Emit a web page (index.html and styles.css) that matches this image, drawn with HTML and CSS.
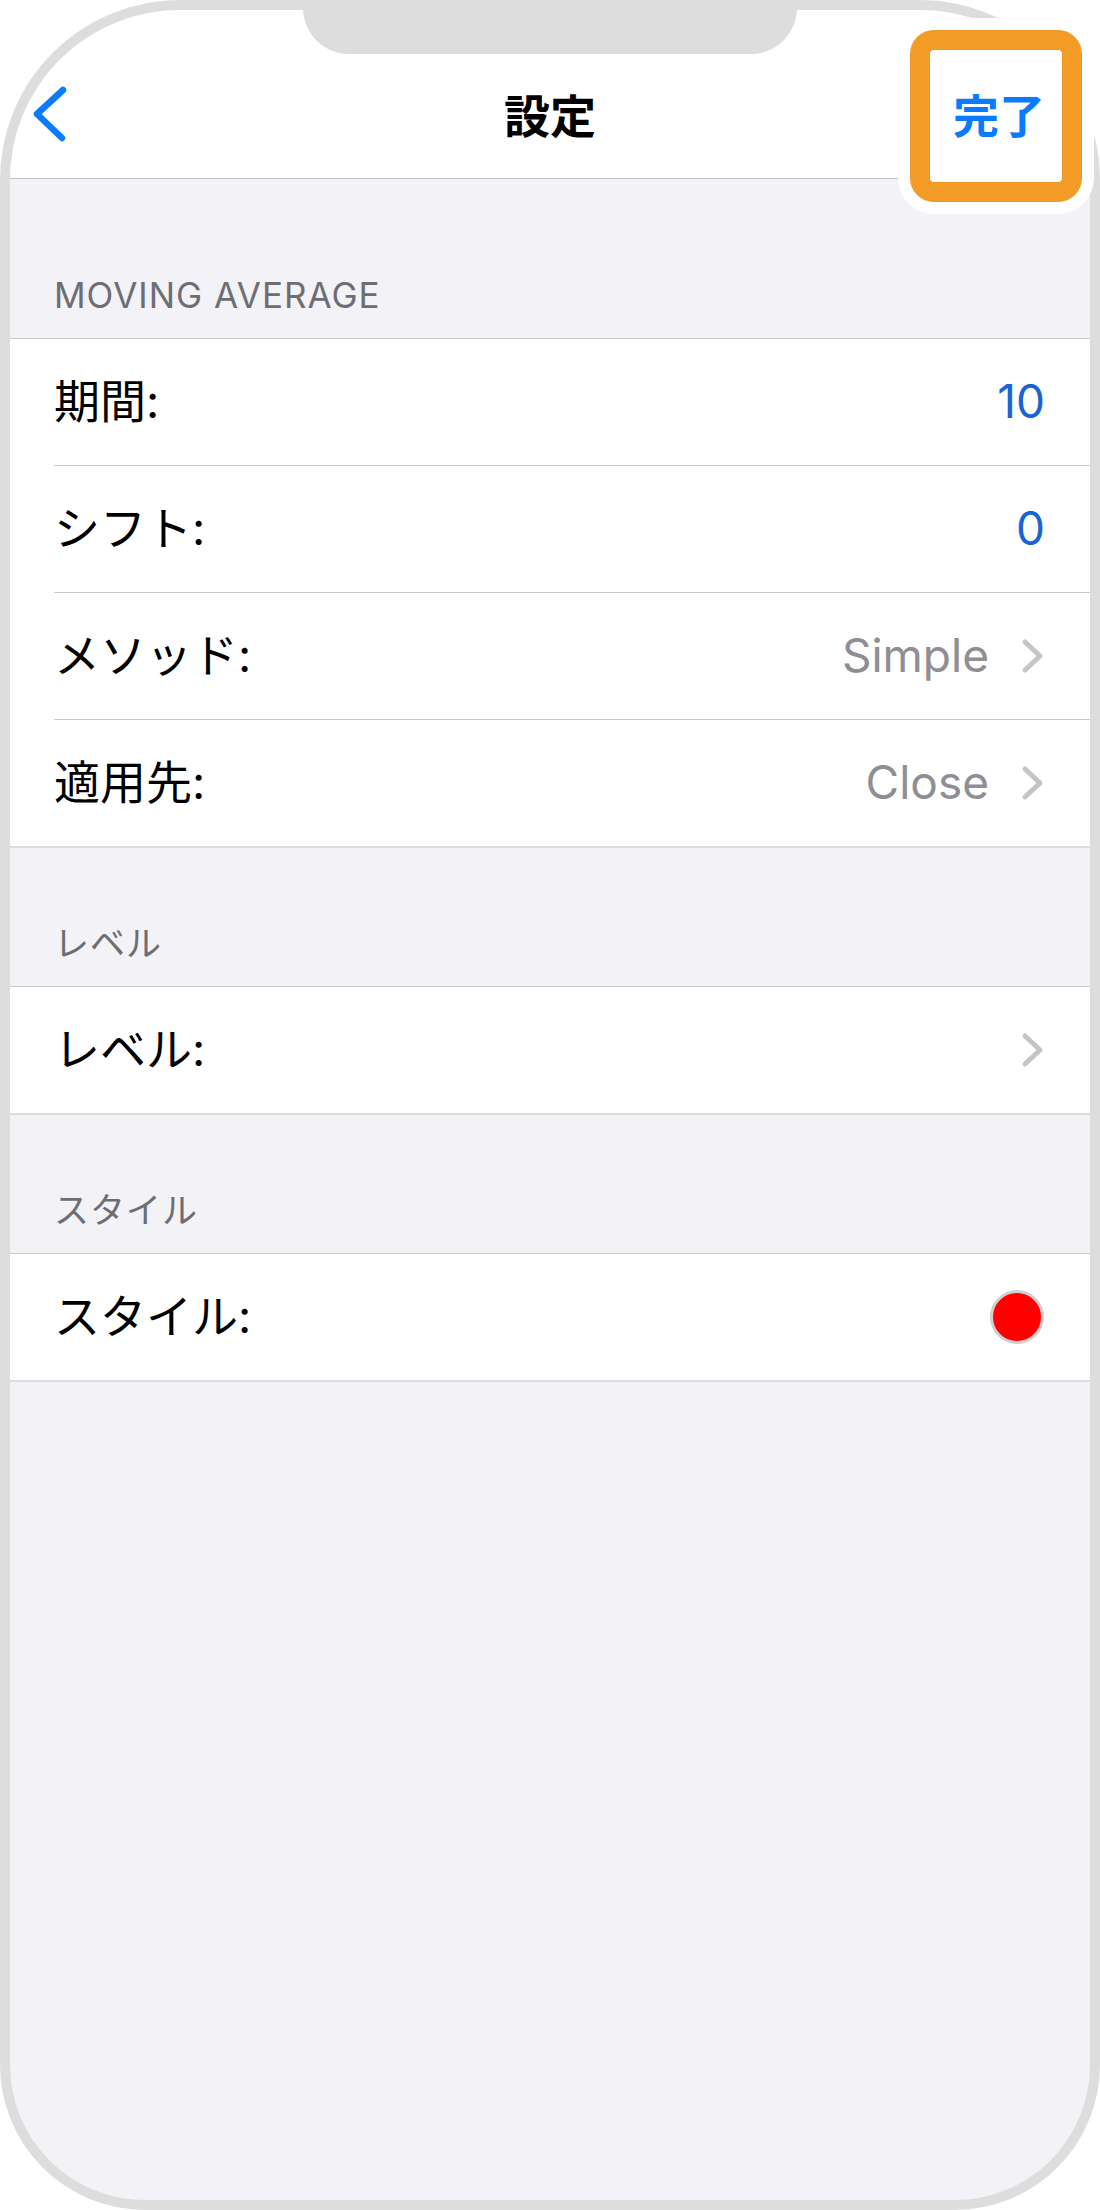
FILE: index.html
```html
<!DOCTYPE html>
<html lang="ja">
<head>
    <meta charset="UTF-8" />
    <title>設定</title>
    <meta name="viewport" content="width=device-width, initial-scale=1.0" />
    <link rel="stylesheet" href="styles.css">
</head>
<body>
    <div class="page">
        <div class="phone">
            <header class="navbar">
                <a class="back" href="#">
                    <svg width="36" height="60" viewBox="0 0 36 60">
                        <polyline points="31,6 5,30 30,54" fill="none" stroke="#0a7aff" stroke-width="6.5" stroke-linecap="round" stroke-linejoin="round" />
                    </svg>
                </a>
                <h1 class="title">設定</h1>
                <a class="done" href="#">完了</a>
            </header>

            <div class="section-header first">MOVING AVERAGE</div>
            <div class="group">
                <div class="row">
                    <span class="label">期間:</span>
                    <span class="value blue">10</span>
                </div>
                <div class="row">
                    <span class="label">シフト:</span>
                    <span class="value blue">0</span>
                </div>
                <div class="row">
                    <span class="label">メソッド:</span>
                    <span class="value gray">Simple</span>
                    <svg class="chevron" width="24" height="40" viewBox="0 0 24 40">
                        <polyline points="4,6 19,20 4,34" fill="none" stroke="#c4c4c7" stroke-width="5" stroke-linecap="round" stroke-linejoin="round" />
                    </svg>
                </div>
                <div class="row">
                    <span class="label">適用先:</span>
                    <span class="value gray">Close</span>
                    <svg class="chevron" width="24" height="40" viewBox="0 0 24 40">
                        <polyline points="4,6 19,20 4,34" fill="none" stroke="#c4c4c7" stroke-width="5" stroke-linecap="round" stroke-linejoin="round" />
                    </svg>
                </div>
            </div>

            <div class="section-header">レベル</div>
            <div class="group">
                <div class="row">
                    <span class="label">レベル:</span>
                    <svg class="chevron push" width="24" height="40" viewBox="0 0 24 40">
                        <polyline points="4,6 19,20 4,34" fill="none" stroke="#c4c4c7" stroke-width="5" stroke-linecap="round" stroke-linejoin="round" />
                    </svg>
                </div>
            </div>

            <div class="section-header">スタイル</div>
            <div class="group">
                <div class="row">
                    <span class="label">スタイル:</span>
                    <span class="swatch"></span>
                </div>
            </div>
        </div>

        <!-- device details and the callout drawn over the screen -->
        <div class="notch"></div>
        <div class="highlight"></div>
    </div>
</body>
</html>
```

FILE: styles.css
```css
:root {
    --frame: #dddddd;
    --screen-bg: #f2f2f7;
    --ios-blue: #0a7aff;
    --value-blue: #1763d8;
    --separator: #c8c7cc;
    --header-text: #6d6d72;
    --secondary-text: #8e8e93;
    --callout: #f39c25;
}

body {
    margin: 0;
    background: #ffffff;
    font-family: 'Inter', 'Noto Sans CJK JP', sans-serif;
}

.page {
    position: relative;
    width: 1100px;
    height: 2210px;
}

.phone {
    box-sizing: border-box;
    width: 1100px;
    height: 2210px;
    border: 10px solid var(--frame);
    border-radius: 180px 180px 145px 145px;
    background: var(--screen-bg);
    overflow: hidden;
    display: flex;
    flex-direction: column;
}

/* Navigation bar */
.navbar {
    box-sizing: border-box;
    height: 169px;
    padding: 40px 22px 0;
    background: #ffffff;
    border-bottom: 1px solid #c0c0c4;
    display: grid;
    grid-template-columns: 1fr auto 1fr;
    align-items: center;
    flex-shrink: 0;
}

.back {
    display: flex;
    align-items: center;
}

.title {
    margin: 0;
    font-family: 'Noto Sans CJK JP', sans-serif;
    font-size: 46px;
    font-weight: 700;
    line-height: 1.2;
    color: #000000;
}

.done {
    justify-self: end;
    margin-right: 23px;
    position: relative;
    z-index: 3; /* stays above the callout */
    font-family: 'Noto Sans CJK JP', sans-serif;
    font-size: 46px;
    font-weight: 700;
    line-height: 1.2;
    color: var(--ios-blue);
    text-decoration: none;
}

/* Grouped list */
.section-header {
    box-sizing: border-box;
    height: 138px;
    padding: 0 44px 22px;
    display: flex;
    align-items: flex-end;
    font-size: 35px;
    line-height: 42px;
    letter-spacing: 1px;
    color: var(--header-text);
    flex-shrink: 0;
}

.section-header.first {
    height: 159px;
}

.group {
    background: #ffffff;
    border-top: 1px solid var(--separator);
    border-bottom: 2px solid #dcdce0;
    flex-shrink: 0;
}

.row {
    height: 126px;
    margin-left: 44px;
    padding-right: 45px;
    display: flex;
    align-items: center;
}

.row + .row {
    border-top: 1px solid var(--separator);
}

.label {
    font-size: 46px;
    line-height: 1.2;
    color: #000000;
}

.value {
    margin-left: auto;
    font-size: 46px;
    line-height: 1.2;
}

.value.blue {
    color: var(--value-blue);
}

.value.gray {
    color: var(--secondary-text);
}

.chevron {
    margin-left: 32px;
    flex-shrink: 0;
}

.chevron.push {
    margin-left: auto;
}

.swatch {
    box-sizing: border-box;
    width: 54px;
    height: 54px;
    margin-left: auto;
    margin-right: 1px;
    border-radius: 50%;
    border: 3px solid #cfcfcf;
    background: #ff0000;
}

/* Overlays */
.notch {
    position: absolute;
    top: 0;
    left: 303px;
    width: 494px;
    height: 54px;
    background: var(--frame);
    border-radius: 0 0 46px 46px;
    z-index: 1;
}

.highlight {
    position: absolute;
    top: 30px;
    left: 910px;
    box-sizing: border-box;
    width: 172px;
    height: 172px;
    border: 20px solid var(--callout);
    border-radius: 24px;
    background: #ffffff;
    box-shadow: 0 0 0 12px #ffffff;
    z-index: 2;
}
```
